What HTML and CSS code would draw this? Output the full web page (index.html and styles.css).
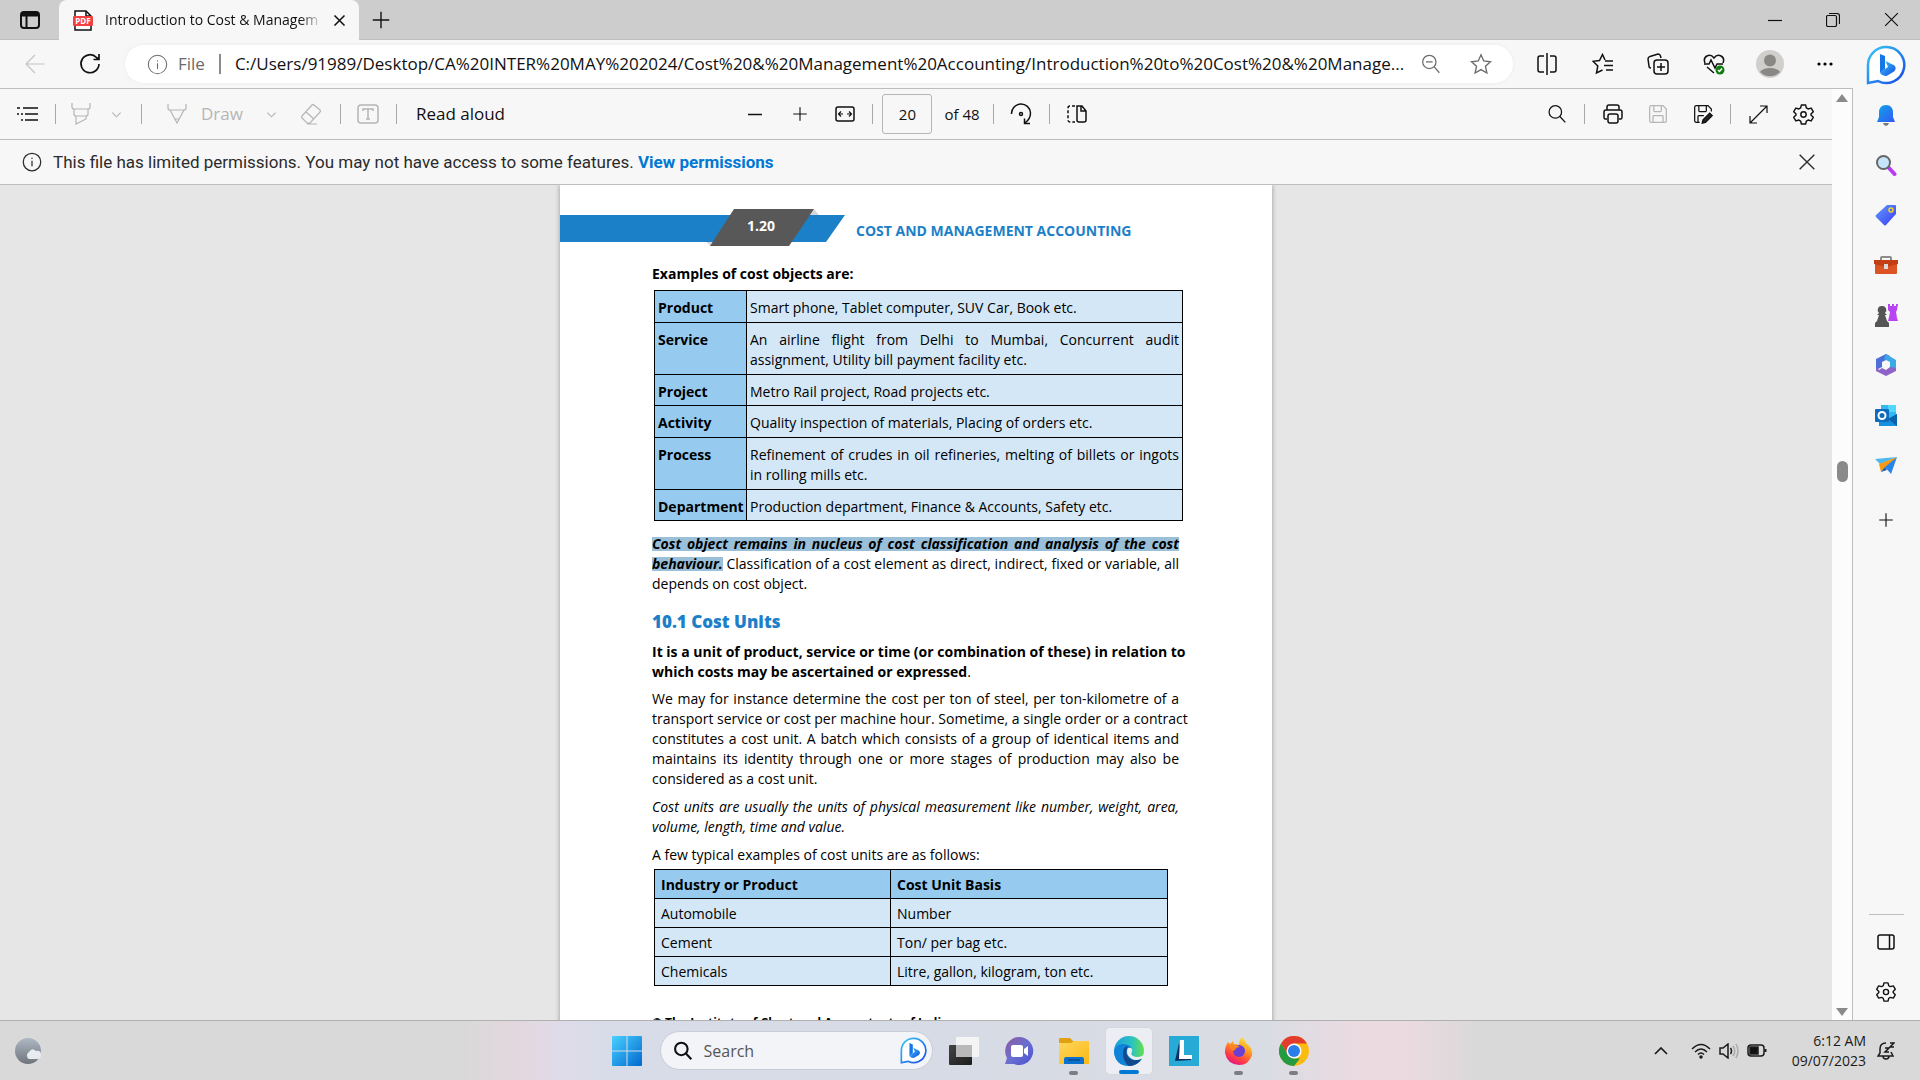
FILE: index.html
```html
<!DOCTYPE html>
<html lang="en">
<head>
<meta charset="utf-8">
<title>Introduction to Cost &amp; Management Accounting</title>
<link rel="stylesheet" href="styles.css">
</head>
<body>
<svg class="defs" aria-hidden="true">
  <defs>
    <linearGradient id="bing" x1="0" y1="0" x2="1" y2="1"><stop offset="0" stop-color="#37c9f5"/><stop offset="1" stop-color="#174ae4"/></linearGradient>
    <linearGradient id="win" x1="0" y1="0" x2="1" y2="1"><stop offset="0" stop-color="#49d0ff"/><stop offset="1" stop-color="#0069cf"/></linearGradient>
    <linearGradient id="bell" x1="0" y1="0" x2="1" y2="1"><stop offset="0" stop-color="#0ea5e6"/><stop offset="1" stop-color="#3458f5"/></linearGradient>
    <linearGradient id="tag" x1="0" y1="0" x2="1" y2="1"><stop offset="0" stop-color="#5f9bfb"/><stop offset="1" stop-color="#3c3cf5"/></linearGradient>
    <linearGradient id="chat" x1="0" y1="0" x2="1" y2="1"><stop offset="0" stop-color="#8e5a9c"/><stop offset=".5" stop-color="#6a6fd0"/><stop offset="1" stop-color="#4b4fd2"/></linearGradient>
    <linearGradient id="edge1" x1="0" y1="0" x2="1" y2="0"><stop offset="0" stop-color="#1b9de2"/><stop offset=".6" stop-color="#2cc3c0"/><stop offset="1" stop-color="#66e04a"/></linearGradient>
    <linearGradient id="fox" x1=".8" y1="0" x2=".3" y2="1"><stop offset="0" stop-color="#fff044"/><stop offset=".4" stop-color="#ff9a1f"/><stop offset=".75" stop-color="#ff3d45"/><stop offset="1" stop-color="#e0128a"/></linearGradient>
    <linearGradient id="moon" x1="0" y1="0" x2="0" y2="1"><stop offset="0" stop-color="#aeb8c4"/><stop offset="1" stop-color="#6f757c"/></linearGradient>
    <linearGradient id="folder" x1="0" y1="0" x2="1" y2="1"><stop offset="0" stop-color="#ffd75e"/><stop offset="1" stop-color="#fbb813"/></linearGradient>
    <linearGradient id="dark" x1="0" y1="0" x2="1" y2="1"><stop offset="0" stop-color="#444"/><stop offset="1" stop-color="#1c1c1c"/></linearGradient>
    <symbol id="i-info" viewBox="0 0 24 24"><circle cx="12" cy="12" r="10.5"/><path d="M12 10.5v6.500M12 7v1.500"/></symbol>
    <symbol id="i-x" viewBox="0 0 24 24"><path d="M4 4l16 16M20 4L4 20"/></symbol>
    <symbol id="i-plus" viewBox="0 0 24 24"><path d="M12 3v18M3 12h18"/></symbol>
    <symbol id="i-chev" viewBox="0 0 24 24"><path d="M3 8l9 9 9-9"/></symbol>
    <symbol id="i-gear" viewBox="0 0 24 24"><path d="M9.800 2h4.400l.8 3.200 1.800 1 3.200-.9 2.200 3.800L19.800 11.500v1l2.400 2.400-2.200 3.800-3.200-.9-1.800 1-.8 3.200H9.800L9 18.800l-1.800-1-3.200.9-2.200-3.800 2.400-2.400v-1L1.800 9.100 4 5.300l3.200.9 1.800-1z" stroke-linejoin="round"/><circle cx="12" cy="12" r="2.800"/></symbol>
    <symbol id="i-search" viewBox="0 0 24 24"><circle cx="10" cy="9.500" r="7.500"/><path d="M15.500 15l6.500 7"/></symbol>
    <symbol id="i-save" viewBox="0 0 24 24"><path d="M2 4q0-2 2-2h14l4 4v14q0 2-2 2H4q-2 0-2-2zM7 2v6q0 1 1 1h7q1 0 1-1V2M6 22v-7q0-1 1-1h10q1 0 1 1v7"/></symbol>
    <symbol id="i-bing" viewBox="0 0 40 40"><path d="M20 2a18 18 0 1 1-8 34L2 38V20A18 18 0 0 1 20 2z" fill="#fff" stroke="url(#bing)" stroke-width="2.500"/><path d="M14 9l5 2v13l-5 4z" fill="#1677e8"/><path d="M14 28l5-4 3-2-2.500-6 9 4.500q2.500 3-.5 6l-7.500 4.500q-4 .5-6.500-3z" fill="url(#bing)"/></symbol>
  </defs>
</svg>

<header class="tabstrip">
  <button class="tab-menu" aria-label="Tab actions"><svg class="ic" width="20" height="20" viewBox="0 0 20 20"><rect x="1" y="2" width="18" height="16" rx="3" stroke-width="2"/><path d="M1 4h18M6.500 5v13" stroke-width="2"/><path d="M2 3h16v3H2z" fill="#111"/></svg></button>
  <div class="tab">
    <svg width="20" height="21" viewBox="0 0 20 21"><path d="M2 20V1h11l5 5v14z" fill="#fff" stroke="#111" stroke-width="1.500"/><path d="M13 1v5h5" fill="none" stroke="#111" stroke-width="1.500"/><rect x="0" y="6" width="20" height="10" rx="1" fill="#f24040"/><text x="10" y="14" text-anchor="middle" class="pdf-mark">PDF</text></svg>
    <span class="tab-title">Introduction to Cost &amp; Managem</span>
    <button class="tab-close" aria-label="Close tab"><svg class="ic bold" width="15" height="15"><use href="#i-x"/></svg></button>
  </div>
  <button class="new-tab" aria-label="New tab"><svg class="ic med" width="22" height="22"><use href="#i-plus"/></svg></button>
  <div class="window-controls">
    <button aria-label="Minimize"><svg class="ic" width="14" height="14" viewBox="0 0 14 14"><path d="M0 7.500h14"/></svg></button>
    <button aria-label="Restore"><svg class="ic" width="14" height="14" viewBox="0 0 14 14"><rect x=".5" y="2.500" width="10" height="11" rx="1.500"/><path d="M3 .5h8q2.500 0 2.500 2.500v8"/></svg></button>
    <button aria-label="Close"><svg class="ic med" width="19" height="19"><use href="#i-x"/></svg></button>
  </div>
</header>

<div class="browser">
  <main class="content">
    <div class="addressbar">
      <button class="nav back" aria-label="Back"><svg class="ic" width="20" height="20" viewBox="0 0 20 20"><path d="M19.500 10H1M10 1l-9 9 9 9"/></svg></button>
      <button class="nav" aria-label="Refresh"><svg class="ic" width="22" height="22" viewBox="0 0 22 22"><path d="M20 11a9 9 0 1 1-2.500-6.500L19.500 6M20 1v5.500h-5.500" stroke-width="1.700"/></svg></button>
      <div class="omnibox">
        <svg class="ic" width="21" height="21"><use href="#i-info"/></svg>
        <span class="scheme">File</span><i class="pipe"></i>
        <input class="url" aria-label="Address" value="C:/Users/91989/Desktop/CA%20INTER%20MAY%202024/Cost%20&amp;%20Management%20Accounting/Introduction%20to%20Cost%20&amp;%20Manage...">
        <button class="pill-btn" aria-label="Zoom"><svg class="ic med" width="20" height="20" viewBox="0 0 24 24"><circle cx="10" cy="9.500" r="8"/><path d="M16 15.500l6 7M6 9.500h8"/></svg></button>
        <button class="pill-btn" aria-label="Add favorite"><svg class="ic med" width="22" height="22" viewBox="0 0 24 24"><path d="M12 2l3 6.700 7.300.8-5.400 5 1.500 7.300-6.400-3.700-6.400 3.700 1.500-7.300-5.400-5L9 8.700z"/></svg></button>
      </div>
      <div class="actions">
        <button aria-label="Split screen"><svg class="ic med" width="22" height="22" viewBox="0 0 22 22"><path d="M8 3H4Q2 3 2 5v12q0 2 2 2h4M14 3h4q2 0 2 2v12q0 2-2 2h-4M11 0v22"/></svg></button>
        <button aria-label="Favorites"><svg class="ic med" width="22" height="22" viewBox="0 0 22 22"><path d="M13 7L10.500 1.500 7.500 7.500l-6.500.8 4.800 4.700L4.500 20l6-3M13 8h8M12 12.500h9M14 17h7"/></svg></button>
        <button aria-label="Collections"><svg class="ic med" width="22" height="22" viewBox="0 0 22 22"><path d="M4 15q-2 0-2-2L1 6q0-2 2-2.500L11 1q2 0 2.500 2l.5 2"/><rect x="7" y="7" width="14" height="14" rx="3"/><path d="M14 10v8M10 14h8"/></svg></button>
        <button aria-label="Browser essentials"><svg class="ic med" width="22" height="22" viewBox="0 0 22 22"><path d="M2 10Q0 5 4 3t7 2q3-4 7-2t2 7M1 11h5l2-4 4 8 2-4h6M4 14l7 6"/><circle cx="17" cy="17" r="4.500" fill="#107c10" stroke="none"/><path d="M15 17l1.500 1.500L19 15.500" stroke="#fff"/></svg></button>
        <button aria-label="Profile"><svg width="28" height="28" viewBox="0 0 28 28"><circle cx="14" cy="14" r="14" fill="#d0cfcc"/><circle cx="14" cy="10.500" r="6" fill="#8a8886"/><path d="M4 22q3-4 10-4t10 4a14 14 0 0 1-20 0z" fill="#8a8886"/></svg></button>
        <button aria-label="Settings and more"><svg width="18" height="6" viewBox="0 0 18 6"><circle cx="3" cy="3" r="1.600"/><circle cx="9" cy="3" r="1.600"/><circle cx="15" cy="3" r="1.600"/></svg></button>
      </div>
    </div>

    <div class="viewer">
      <div class="reader">
        <div class="toolbar">
          <div class="tools start">
            <button class="cell" aria-label="Contents"><svg class="ic med" width="22" height="16" viewBox="0 0 22 16"><path d="M6 2h15M8 8h13M8 14h13M0 2h3M4 8h2M4 14h2M0 8h2" stroke-width="1.700"/></svg></button><i class="sep"></i>
            <button class="cell highlight" disabled aria-label="Highlight"><svg class="ic" width="20" height="22" viewBox="0 0 20 22"><path d="M1 0v4q0 2 2 2h14q2 0 2-2V0M3 6v5q0 2 2 2h10q2 0 2-2V6M5 13v8l10-5v-3"/></svg></button>
            <button class="more gap-after" disabled aria-label="Highlight colors"><svg class="ic bold" width="11" height="11"><use href="#i-chev"/></svg></button><i class="sep"></i>
            <button class="draw" disabled><svg class="ic" width="20" height="22" viewBox="0 0 20 22"><path d="M1 1v4q0 2 2 2h14q2 0 2-2V1M3 7l7 13 7-13M8 16h4"/></svg>Draw</button>
            <button class="more" disabled aria-label="Ink properties"><svg class="ic bold" width="11" height="11"><use href="#i-chev"/></svg></button>
            <button class="cell erase" disabled aria-label="Erase"><svg class="ic" width="22" height="22" viewBox="0 0 22 22"><path d="M2 13L12 2q1-1 2 0l6 5q1 1 0 2L10 20H7l-5-5q-1-1 0-2zM6 9l8 7M7 21h10"/></svg></button><i class="sep"></i>
            <button class="cell" disabled aria-label="Add text"><svg class="ic med" width="22" height="20" viewBox="0 0 22 20"><rect x="1" y="1" width="20" height="18" rx="3"/><path d="M6 7V5h10v2M11 5v10M9 15h4"/></svg></button><i class="sep"></i>
            <button class="read">Read aloud</button>
          </div>
          <div class="tools">
            <button class="cell" aria-label="Zoom out"><svg class="ic med" width="14" height="14" viewBox="0 0 14 14"><path d="M0 7.500h14"/></svg></button>
            <button class="cell" aria-label="Zoom in"><svg class="ic med" width="18" height="18"><use href="#i-plus"/></svg></button>
            <button class="cell" aria-label="Fit to width"><svg class="ic med" width="20" height="16" viewBox="0 0 20 16"><rect x="1" y="1" width="18" height="14" rx="2"/><path d="M4 8h4M6 5.500L3.500 8 6 10.500M12 8h4M14 5.500L16.500 8 14 10.500" stroke-width="1.200"/></svg></button><i class="sep"></i>
            <input class="page-no" aria-label="Page" value="20"><span class="page-of">of 48</span><i class="sep"></i>
            <button class="cell" aria-label="Rotate"><svg class="ic med" width="22" height="22" viewBox="0 0 22 22"><path d="M1.500 11a9.500 9.500 0 0 1 19-1q0 6-5.500 10M14.500 15.500V20.500H20"/><circle cx="11" cy="11" r="1.500"/></svg></button><i class="sep"></i>
            <button class="cell" aria-label="Page view"><svg class="ic med" width="20" height="18" viewBox="0 0 20 18"><path d="M10 1h5l4 5v9q0 2-2 2h-5q-2 0-2-2zM14 1v5h5"/><path d="M8 1H3Q1 1 1 3v12q0 2 2 2h5" stroke-dasharray="3 2"/></svg></button>
          </div>
          <div class="tools end">
            <button class="cell" aria-label="Find"><svg class="ic med" width="20" height="20"><use href="#i-search"/></svg></button><i class="sep"></i>
            <button class="cell" aria-label="Print"><svg class="ic med" width="20" height="20" viewBox="0 0 20 20"><path d="M4 6V3q0-2 2-2h8q2 0 2 2v3M4 15H2q-1 0-1-2V8q0-2 2-2h14q2 0 2 2v5q0 2-1 2h-2"/><rect x="5" y="10" width="10" height="9" rx="2"/></svg></button>
            <button class="cell" disabled aria-label="Save"><svg class="ic med" width="20" height="20"><use href="#i-save"/></svg></button>
            <button class="cell" aria-label="Save as"><svg class="ic med" width="20" height="20" viewBox="0 0 24 24"><path d="M8 22H4q-2 0-2-2V4q0-2 2-2h14l4 4v3M7 2v6q0 1 1 1h7q1 0 1-1V2M6 22v-7q0-1 1-1h6"/><path d="M11 23l1-4 8-8 3 3-8 8z" fill="#222"/></svg></button><i class="sep"></i>
            <button class="cell" aria-label="Full screen"><svg class="ic" width="19" height="19" viewBox="0 0 19 19"><path d="M1 18L18 1M11 1h7v7M1 11v7h7"/></svg></button>
            <button class="cell" aria-label="PDF settings"><svg class="ic med" width="23" height="23"><use href="#i-gear"/></svg></button>
          </div>
        </div>

        <div class="notice">
          <svg class="ic med" width="20" height="20"><use href="#i-info"/></svg>
          <p>This file has limited permissions. You may not have access to some features. <a href="#permissions">View permissions</a></p>
          <button aria-label="Dismiss"><svg class="ic med" width="22" height="22"><use href="#i-x"/></svg></button>
        </div>

        <div class="canvas">
          <article class="page">
            <div class="running-head">
              <svg width="290" height="38" viewBox="0 0 290 38"><path d="M0 6h285l-19 27H0z" fill="#1c80c8"/><path d="M254 0l5 6h-9zM146 33h10l-5 4z" fill="#d5d8da"/><path d="M174 0h80l-25 37h-79z" fill="#585858"/><text x="201" y="22" text-anchor="middle" class="folio">1.20</text></svg>
              <span>COST AND MANAGEMENT ACCOUNTING</span>
            </div>
            <div class="body">
              <h3>Examples of cost objects are:</h3>
              <table class="objects">
                <tr><th scope="row">Product</th><td>Smart phone, Tablet computer, SUV Car, Book etc.</td></tr>
                <tr><th scope="row">Service</th><td><span class="full">An airline flight from Delhi to Mumbai, Concurrent audit</span> assignment, Utility bill payment facility etc.</td></tr>
                <tr><th scope="row">Project</th><td>Metro Rail project, Road projects etc.</td></tr>
                <tr><th scope="row">Activity</th><td>Quality inspection of materials, Placing of orders etc.</td></tr>
                <tr><th scope="row">Process</th><td><span class="full">Refinement of crudes in oil refineries, melting of billets or ingots</span> in rolling mills etc.</td></tr>
                <tr><th scope="row">Department</th><td>Production department, Finance &amp; Accounts, Safety etc.</td></tr>
              </table>
              <p class="after-table"><span class="full"><mark>Cost object remains in nucleus of cost classification and analysis of the cost</mark></span> <span class="full"><mark>behaviour.</mark> Classification of a cost element as direct, indirect, fixed or variable, all</span> depends on cost object.</p>
              <h2>10.1 Cost Units</h2>
              <p class="lead"><strong><span class="full">It is a unit of product, service or time (or combination of these) in relation to</span> which costs may be ascertained or expressed</strong>.</p>
              <p><span class="full">We may for instance determine the cost per ton of steel, per ton-kilometre of a</span> <span class="full">transport service or cost per machine hour. Sometime, a single order or a contract</span> <span class="full">constitutes a cost unit. A batch which consists of a group of identical items and</span> <span class="full">maintains its identity through one or more stages of production may also be</span> considered as a cost unit.</p>
              <p><em><span class="full">Cost units are usually the units of physical measurement like number, weight, area,</span> volume, length, time and value.</em></p>
              <p>A few typical examples of cost units are as follows:</p>
              <table class="units">
                <tr><th scope="col">Industry or Product</th><th scope="col">Cost Unit Basis</th></tr>
                <tr><td>Automobile</td><td>Number</td></tr>
                <tr><td>Cement</td><td>Ton/ per bag etc.</td></tr>
                <tr><td>Chemicals</td><td>Litre, gallon, kilogram, ton etc.</td></tr>
              </table>
              <p class="footer-line">© The Institute of Chartered Accountants of India</p>
            </div>
          </article>
        </div>
      </div>
      <div class="scrollbar"><i class="up"></i><i class="thumb"></i><i class="down"></i></div>
    </div>
  </main>

  <aside class="sidebar">
    <button class="bing" aria-label="Discover"><svg width="40" height="40"><use href="#i-bing"/></svg></button>
    <button aria-label="Notifications"><svg width="22" height="22" viewBox="0 0 22 22"><path d="M11 1q7 0 7 8v4l2 5H2l2-5V9q0-8 7-8z" fill="url(#bell)"/><path d="M8 19h6q-1 3-3 3t-3-3z" fill="#777"/></svg></button>
    <button aria-label="Search"><svg width="22" height="22" viewBox="0 0 22 22"><path d="M14 14l5.500 6" stroke="#b83cf5" stroke-width="4" stroke-linecap="round"/><circle cx="8.500" cy="8.500" r="6.500" fill="#c5e6fa" stroke="#666" stroke-width="2"/></svg></button>
    <button aria-label="Shopping"><svg width="22" height="22" viewBox="0 0 22 22"><path d="M12 1h8q1 0 1 1v8L11 21q-1 1-2 0l-8-8q-1-1 0-2z" fill="url(#tag)"/><circle cx="16" cy="6" r="2" fill="#4b6cf8" stroke="#f9d423" stroke-width="1.500"/></svg></button>
    <button aria-label="Tools"><svg width="24" height="20" viewBox="0 0 24 20"><path d="M7 6V3q0-1 1-1h8q1 0 1 1v3" fill="none" stroke="#8b8b8b" stroke-width="2"/><rect x="1" y="6" width="22" height="13" rx="1" fill="#dc5324"/><path d="M0 5h24v4L12 12 0 9z" fill="#c23f13"/><rect x="10" y="9" width="4" height="5" fill="#d9d9d9"/></svg></button>
    <button aria-label="Games"><svg width="24" height="24" viewBox="0 0 24 24"><path d="M14 1h2v2h2V1h2v2h2V1h2l-1 6-1 2 1 6 1 3H14l1-4 1-5-2-2z" fill="#b945f2"/><path d="M8 3a4 4 0 0 1 3 7l2 2H11l2 6 2 2v4H1v-4l2-2 2-6H3l2-2A4 4 0 0 1 8 3z" fill="#555"/></svg></button>
    <button aria-label="Microsoft 365"><svg width="22" height="22" viewBox="0 0 22 22"><path d="M11 0L1 5v11l6-3V8l4-2 4-4z" fill="#4c6fd8"/><path d="M11 0l10 6v11l-6-3V8l-6-3z" fill="#3ba9e6"/><path d="M1 13v4l10 5 10-5v-3l-6-1-4 3-4-2-3 2z" fill="#8d62c9"/><circle cx="11" cy="11" r="3.500" fill="#f7f7f7"/></svg></button>
    <button aria-label="Outlook"><svg width="22" height="22" viewBox="0 0 22 22"><path d="M6 1h15v14H6z" fill="#35b8f1"/><path d="M13 1h8v7h-8z" fill="#50d9ff"/><path d="M4 10l9 5 9-5v12H4z" fill="#1490df"/><path d="M22 10v12l-9-7z" fill="#0a63a8"/><rect y="5" width="14" height="13" rx="1" fill="#0f6cbd"/><circle cx="7" cy="11.500" r="3.500" fill="none" stroke="#fff" stroke-width="2"/></svg></button>
    <button aria-label="Drop"><svg width="22" height="18" viewBox="0 0 22 18"><path d="M22 1L0 3l5 5z" fill="#4cb8f0"/><path d="M22 1L4 8l2 8z" fill="#f59a12"/><path d="M22 1L10 11l6 7z" fill="#2683e8"/><path d="M10 11l-4 5 6-2z" fill="#1a5fb8"/></svg></button>
    <button aria-label="Customize"><svg class="ic med plus" width="18" height="18"><use href="#i-plus"/></svg></button>
    <div class="sidebar-end">
      <button aria-label="Hide sidebar"><svg class="ic med" width="18" height="16" viewBox="0 0 18 16"><rect x="1" y="1" width="16" height="14" rx="2"/><path d="M12.500 1v14"/></svg></button>
      <button aria-label="Sidebar settings"><svg class="ic med" width="22" height="22"><use href="#i-gear"/></svg></button>
    </div>
  </aside>
</div>

<footer class="taskbar">
  <button class="weather" aria-label="Weather"><svg width="30" height="28" viewBox="0 0 30 28"><circle cx="14" cy="14" r="13" fill="url(#moon)"/><path d="M15 22a4 4 0 0 1 0-7q3-5 7-1 5-1 5 4 0 4-4 4z" fill="#e8ecf1"/></svg></button>
  <div class="apps">
    <button aria-label="Start"><svg width="30" height="30" viewBox="0 0 30 30"><path d="M1 0h13.500v14.500H0V1q0-1 1-1zM15.500 0H29q1 0 1 1v13.500H15.500zM0 15.500h14.500V30H1q-1 0-1-1zM15.500 15.500H30V29q0 1-1 1H15.500z" fill="url(#win)"/></svg></button>
    <label class="search"><svg class="ic bold" width="20" height="20"><use href="#i-search"/></svg><input type="text" placeholder="Search" aria-label="Search"><svg width="27" height="27"><use href="#i-bing"/></svg></label>
    <button aria-label="Task view"><svg width="30" height="28" viewBox="0 0 30 28"><rect x="0" y="8" width="23" height="20" rx="1" fill="url(#dark)"/><rect x="7" y="0" width="23" height="20" rx="1" fill="#f4f4f4"/><path d="M7 8h16v12H7z" fill="#b9b9b9"/></svg></button>
    <button aria-label="Chat"><svg width="30" height="30" viewBox="0 0 30 30"><path d="M15 1a14 14 0 1 1-5 27H1l2-6A14 14 0 0 1 15 1z" fill="url(#chat)"/><rect x="7" y="9" width="12" height="12" rx="2" fill="#fff"/><path d="M20 13l4-3v10l-4-3z" fill="#fff"/></svg></button>
    <button class="open" aria-label="File Explorer"><svg width="30" height="28" viewBox="0 0 30 28"><path d="M0 2q0-1 1-1h10l3 3h15v8H0z" fill="#e0a010"/><path d="M0 6h12l3-2h14q1 0 1 1v22H0z" fill="url(#folder)"/><path d="M5 27v-5q0-2 2-2h16q2 0 2 2v5z" fill="#0a72cc"/><path d="M9 23h12" stroke="#064d94" stroke-width="1.500"/></svg></button>
    <button class="open current" aria-label="Microsoft Edge"><svg width="30" height="30" viewBox="0 0 30 30"><circle cx="15" cy="15" r="15" fill="url(#edge1)"/><path d="M0 15Q2 8 9 8q8 0 9 6l-3 2q0 6 5 8 4 1 8-1-5 7-13 7Q1 30 0 15z" fill="#1082d8"/><path d="M9 17q0-6 5-7-3 5-1 9 3 6 9 5 3 0 6-2-5 8-13 8-6-4-6-13z" fill="#114a8b"/><path d="M14 12q5-1 4 4-2 2 1 4 4 2 9 0l2-2v4l-3 1q-5 2-9 0-5-3-5-7 0-3 1-4z" fill="#eceef3"/></svg></button>
    <button aria-label="L app"><svg width="30" height="30" viewBox="0 0 30 30"><path d="M0 0h30v30H0z" fill="#27abd6"/><path d="M6 25l4-18 4 15h8v2z" fill="#0c2e63"/><path d="M11 4h4v15h8v4H10z" fill="#fff"/></svg></button>
    <button class="open" aria-label="Firefox"><svg width="30" height="30" viewBox="0 0 30 30"><path d="M18 1q3 3 4 6 7 5 6 12-3 10-13 10Q3 28 1 17 1 10 4 6l2 2 3-3 1 3q3 0 5 1 0-5 3-8z" fill="url(#fox)"/><circle cx="15" cy="15" r="6" fill="#6b3fd6"/><path d="M5 10q5-3 11 1-4 0-5 3-3 2-6-4z" fill="#ff8423"/></svg></button>
    <button class="open" aria-label="Chrome"><svg width="30" height="30" viewBox="0 0 30 30"><circle cx="15" cy="15" r="15" fill="#fbbc12"/><path d="M2 7.500A15 15 0 0 1 28 7.500H15L9 19z" fill="#e33b2e"/><path d="M2 7.500L9 18.500l6 4h6L15 30A15 15 0 0 1 2 7.500z" fill="#249a41"/><circle cx="15" cy="15" r="7.500" fill="#fff"/><circle cx="15" cy="15" r="6" fill="#2b7de9"/></svg></button>
  </div>
  <div class="tray">
    <button aria-label="Hidden icons"><svg class="ic bold" width="14" height="8" viewBox="0 0 14 8"><path d="M1 7l6-6 6 6" stroke-width="1.700"/></svg></button>
    <button class="status" aria-label="Network, volume, battery">
      <svg class="ic med" width="20" height="16" viewBox="0 0 20 16"><path d="M1 6q9-9 18 0M4 9q6-6 12 0M7 11.500q3-3 6 0"/><circle cx="10" cy="14" r="1" fill="#111"/></svg>
      <svg class="ic med" width="20" height="16" viewBox="0 0 20 16"><path d="M1 5h3l5-4v14l-5-4H1zM11.500 5q2 3 0 6"/><path d="M14 3q3.500 5 0 10M17 1q4 7 0 14" stroke="#aaa"/></svg>
      <svg class="ic med" width="20" height="13" viewBox="0 0 20 13"><rect x="1" y="1" width="16" height="11" rx="3"/><path d="M3 3h8v7H3z" fill="#111"/><path d="M18.500 5v3" stroke-width="2"/></svg>
    </button>
    <button class="clock"><time>6:12 AM</time><time>09/07/2023</time></button>
    <button aria-label="Notifications"><svg class="ic med" width="18" height="18" viewBox="0 0 18 18"><path d="M9 1Q3 1 3 7v4l-2 3h15l-2-4M6 14q0 3 3 3t3-3M8 6h4l-4 4h4M13 1h4l-4 4h4"/></svg></button>
  </div>
</footer>
</body>
</html>
```
FILE: styles.css
```css
* { box-sizing: border-box; }
body {
  margin: 0;
  height: 100vh;
  display: flex;
  flex-direction: column;
  overflow: hidden;
  font: 16px/20px "Open Sans", "Noto Sans", sans-serif;
  color: #111;
  background: #f7f7f7;
}
button, input { font: inherit; color: inherit; border: 0; background: none; padding: 0; margin: 0; }
button { display: inline-flex; align-items: center; justify-content: center; flex: none; }
p, h2, h3 { margin: 0; }
svg { flex: none; }
.defs { position: absolute; width: 0; height: 0; }
.ic { fill: none; stroke: currentColor; stroke-width: 1.2px; }
.ic.med { stroke-width: 1.5px; }
.ic.bold { stroke-width: 2.5px; }

/* tab strip */
.tabstrip { display: flex; height: 40px; background: #cdcdcd; border-bottom: 1px solid #c0c0c0; flex: none; }
.tab-menu { width: 59px; }
.tab { display: flex; align-items: center; width: 300px; height: 40px; padding: 0 3px 0 14px; background: #f7f7f7; border-radius: 8px 8px 0 0; }
.pdf-mark { font: bold 8px "Open Sans", sans-serif; fill: #fff; }
.tab-title {
  flex: 1; margin-left: 12px; overflow: hidden; white-space: nowrap; font-size: 14px;
  -webkit-mask-image: linear-gradient(90deg, #000 90%, transparent);
  mask-image: linear-gradient(90deg, #000 90%, transparent);
}
.tab-close { width: 34px; height: 32px; }
.new-tab { width: 44px; }
.window-controls { display: flex; margin-left: auto; }
.window-controls button { width: 58px; }

.browser { display: flex; flex: 1; min-height: 0; }
.content { display: flex; flex-direction: column; flex: 1; min-width: 0; }

/* address bar */
.addressbar { display: flex; align-items: center; height: 48px; padding-left: 7px; flex: none; }
.nav { width: 55px; height: 40px; }
.nav.back { color: #c4c4c4; }
.omnibox {
  display: flex; align-items: center; flex: 1; height: 38px; margin: 0 6px 0 8px; padding: 0 7px 0 22px;
  background: #fff; border-radius: 19px; color: #6b6b6b; box-shadow: 0 0 4px #0000000d;
}
.scheme { margin-left: 10px; font-size: 17px; }
.pipe { width: 2px; height: 20px; margin: 0 14px; background: #8a8a8a; }
.url { flex: 1; min-width: 0; color: #111; font-size: 17px; }
.pill-btn { width: 50px; height: 36px; }
.actions { display: flex; width: 334px; }
.actions button { flex: 1; height: 40px; }

.viewer { display: flex; flex: 1; min-height: 0; border-top: 1px solid #bdbdbd; border-right: 1px solid #bdbdbd; }
.reader { display: flex; flex-direction: column; flex: 1; min-width: 0; }

/* pdf toolbar */
.toolbar { display: grid; grid-template-columns: 1fr auto 1fr; height: 51px; border-bottom: 1px solid #bdbdbd; flex: none; font-size: 17px; }
.tools { display: flex; align-items: center; }
.tools.start { padding-left: 5px; }
.tools.end { justify-content: flex-end; padding-right: 6px; }
.tools button { height: 40px; white-space: nowrap; }
.tools button:disabled { color: #b5b5b5; }
.sep { width: 1px; height: 20px; margin: 0 5px; background: #a8a8a8; }
.cell { width: 45px; }
.cell.highlight { width: 40px; }
.cell.erase { width: 48px; }
.more { width: 30px; }
.more.gap-after { margin-right: 5px; }
.draw { gap: 14px; padding: 0 14px 0 20px; }
.read { padding: 0 14px; }
.page-no { width: 50px; height: 40px; margin-left: 4px; border: 1px solid #b5b5b5; border-radius: 3px; text-align: center; font-size: 15px; }
.page-of { margin: 0 8px 0 12px; font-size: 15px; }

.notice { display: flex; align-items: center; gap: 11px; height: 45px; padding: 0 14px 0 22px; border-bottom: 1px solid #bdbdbd; flex: none; font: 17px/24px Roboto, sans-serif; color: #2b2b2b; }
.notice a { color: #0078d4; font-weight: 700; text-decoration: none; }
.notice p { flex: 1; }
.notice button { width: 22px; height: 30px; }

/* document */
.canvas { flex: 1; min-height: 0; overflow: hidden; background: #e6e6e6; }
.page { width: 712px; min-height: 1100px; margin: 0 auto; padding-top: 24px; background: #fff; box-shadow: 0 0 5px #00000059; font-family: "Open Sans", "Noto Sans", sans-serif; font-size: 14px; color: #000; }
.running-head { display: flex; gap: 6px; height: 36px; color: #1c80c8; font-weight: 700; }
.running-head span { padding-top: 12px; }
.folio { font: bold 14px "Open Sans", sans-serif; fill: #fff; }
.body { padding: 19px 93px 0 92px; }
.body h3 { font-size: 14px; line-height: 20px; }
.body p { margin-top: 8px; }
.body p.after-table { margin-top: 13px; }
.body .lead + p { margin-top: 7px; }
.full { display: block; white-space: nowrap; text-align: justify; text-align-last: justify; }
.body h2 { margin: 16px 0 8px; font-size: 17px; line-height: 24px; font-weight: 800; color: #1c80c8; }
.body mark { background: linear-gradient(#9abfd9, #9abfd9) 0 50% / 100% 14px no-repeat; color: #000; font-weight: 700; font-style: italic; }
.body table { margin-left: 2px; border-collapse: collapse; background: #d3e7f7; }
.body th { background: #96caee; text-align: left; vertical-align: top; }
.body th, .body td { border: 1px solid #000; }
.objects { width: 529px; margin-top: 6px; table-layout: fixed; }
.objects th, .objects td { padding: 7px 3px 4px; }
.objects th { width: 92px; }
.objects tr:nth-child(3n) > * { padding-bottom: 3px; }
.units { width: 514px; margin-top: 4px; table-layout: fixed; }
.units th, .units td { padding: 5px 6px 3px; }
.units th:first-child { width: 236px; }
.body p.footer-line { margin-top: 27px; font-size: 12px; font-weight: 700; }

.scrollbar { display: flex; flex-direction: column; align-items: center; width: 20px; padding: 5px 0 4px; background: #fcfcfc; flex: none; }
.up, .down { border: 6px solid transparent; }
.up { border-top: 0; border-bottom: 8px solid #8a8a8a; }
.down { border-bottom: 0; border-top: 8px solid #8a8a8a; margin-top: auto; }
.thumb { width: 11px; height: 21px; margin-top: 359px; border-radius: 6px; background: #8a8a8a; }

/* sidebar */
.sidebar { display: flex; flex-direction: column; align-items: center; width: 67px; padding-right: 1px; flex: none; }
.sidebar button { width: 50px; height: 50px; }
.sidebar .plus { margin-top: 9px; }
.sidebar-end { display: flex; flex-direction: column; align-items: center; width: 35px; margin-top: auto; padding: 2px 0 3px; border-top: 1px solid #bdbdbd; }

/* taskbar */
.taskbar {
  display: grid; grid-template-columns: 1fr auto 1fr; align-items: center; height: 60px; flex: none;
  border-top: 1px solid #b0b0b0;
  background: linear-gradient(90deg, #d9d9d9 24%, #e3d7de 27%, #dfdbe8 29%, #d7dce8 32%, #d7dbe5 50%, #dadce3 66%, #ecdae1 71%, #ecdae1 73%, #d9d9d9 77%);
}
.weather { width: 36px; height: 40px; margin-left: 11px; }
.apps { display: flex; align-items: center; gap: 7px; }
.apps button { position: relative; width: 48px; height: 48px; }
.search { display: flex; align-items: center; width: 273px; height: 39px; padding: 0 5px 0 12px; margin-left: 2px; border-radius: 20px; background: #f3f4f8; border: 1px solid #c9ccd6; }
.search input { flex: 1; min-width: 0; margin-left: 11px; }
.search input::placeholder { color: #555; }
.apps .open::after { content: ""; position: absolute; bottom: 0; width: 9px; height: 4px; border-radius: 2px; background: #7d7d82; }
.apps .current { background: #eceef3; border: 1px solid #d5d8de; border-radius: 5px; }
.apps .current::after { width: 20px; background: #0078d4; }
.tray { display: flex; align-items: center; justify-content: flex-end; padding-right: 25px; color: #1b1b1b; }
.status { gap: 8px; margin: 0 25px 0 23px; }
.clock { flex-direction: column; align-items: flex-end; margin-right: 11px; font-size: 14px; }
```
